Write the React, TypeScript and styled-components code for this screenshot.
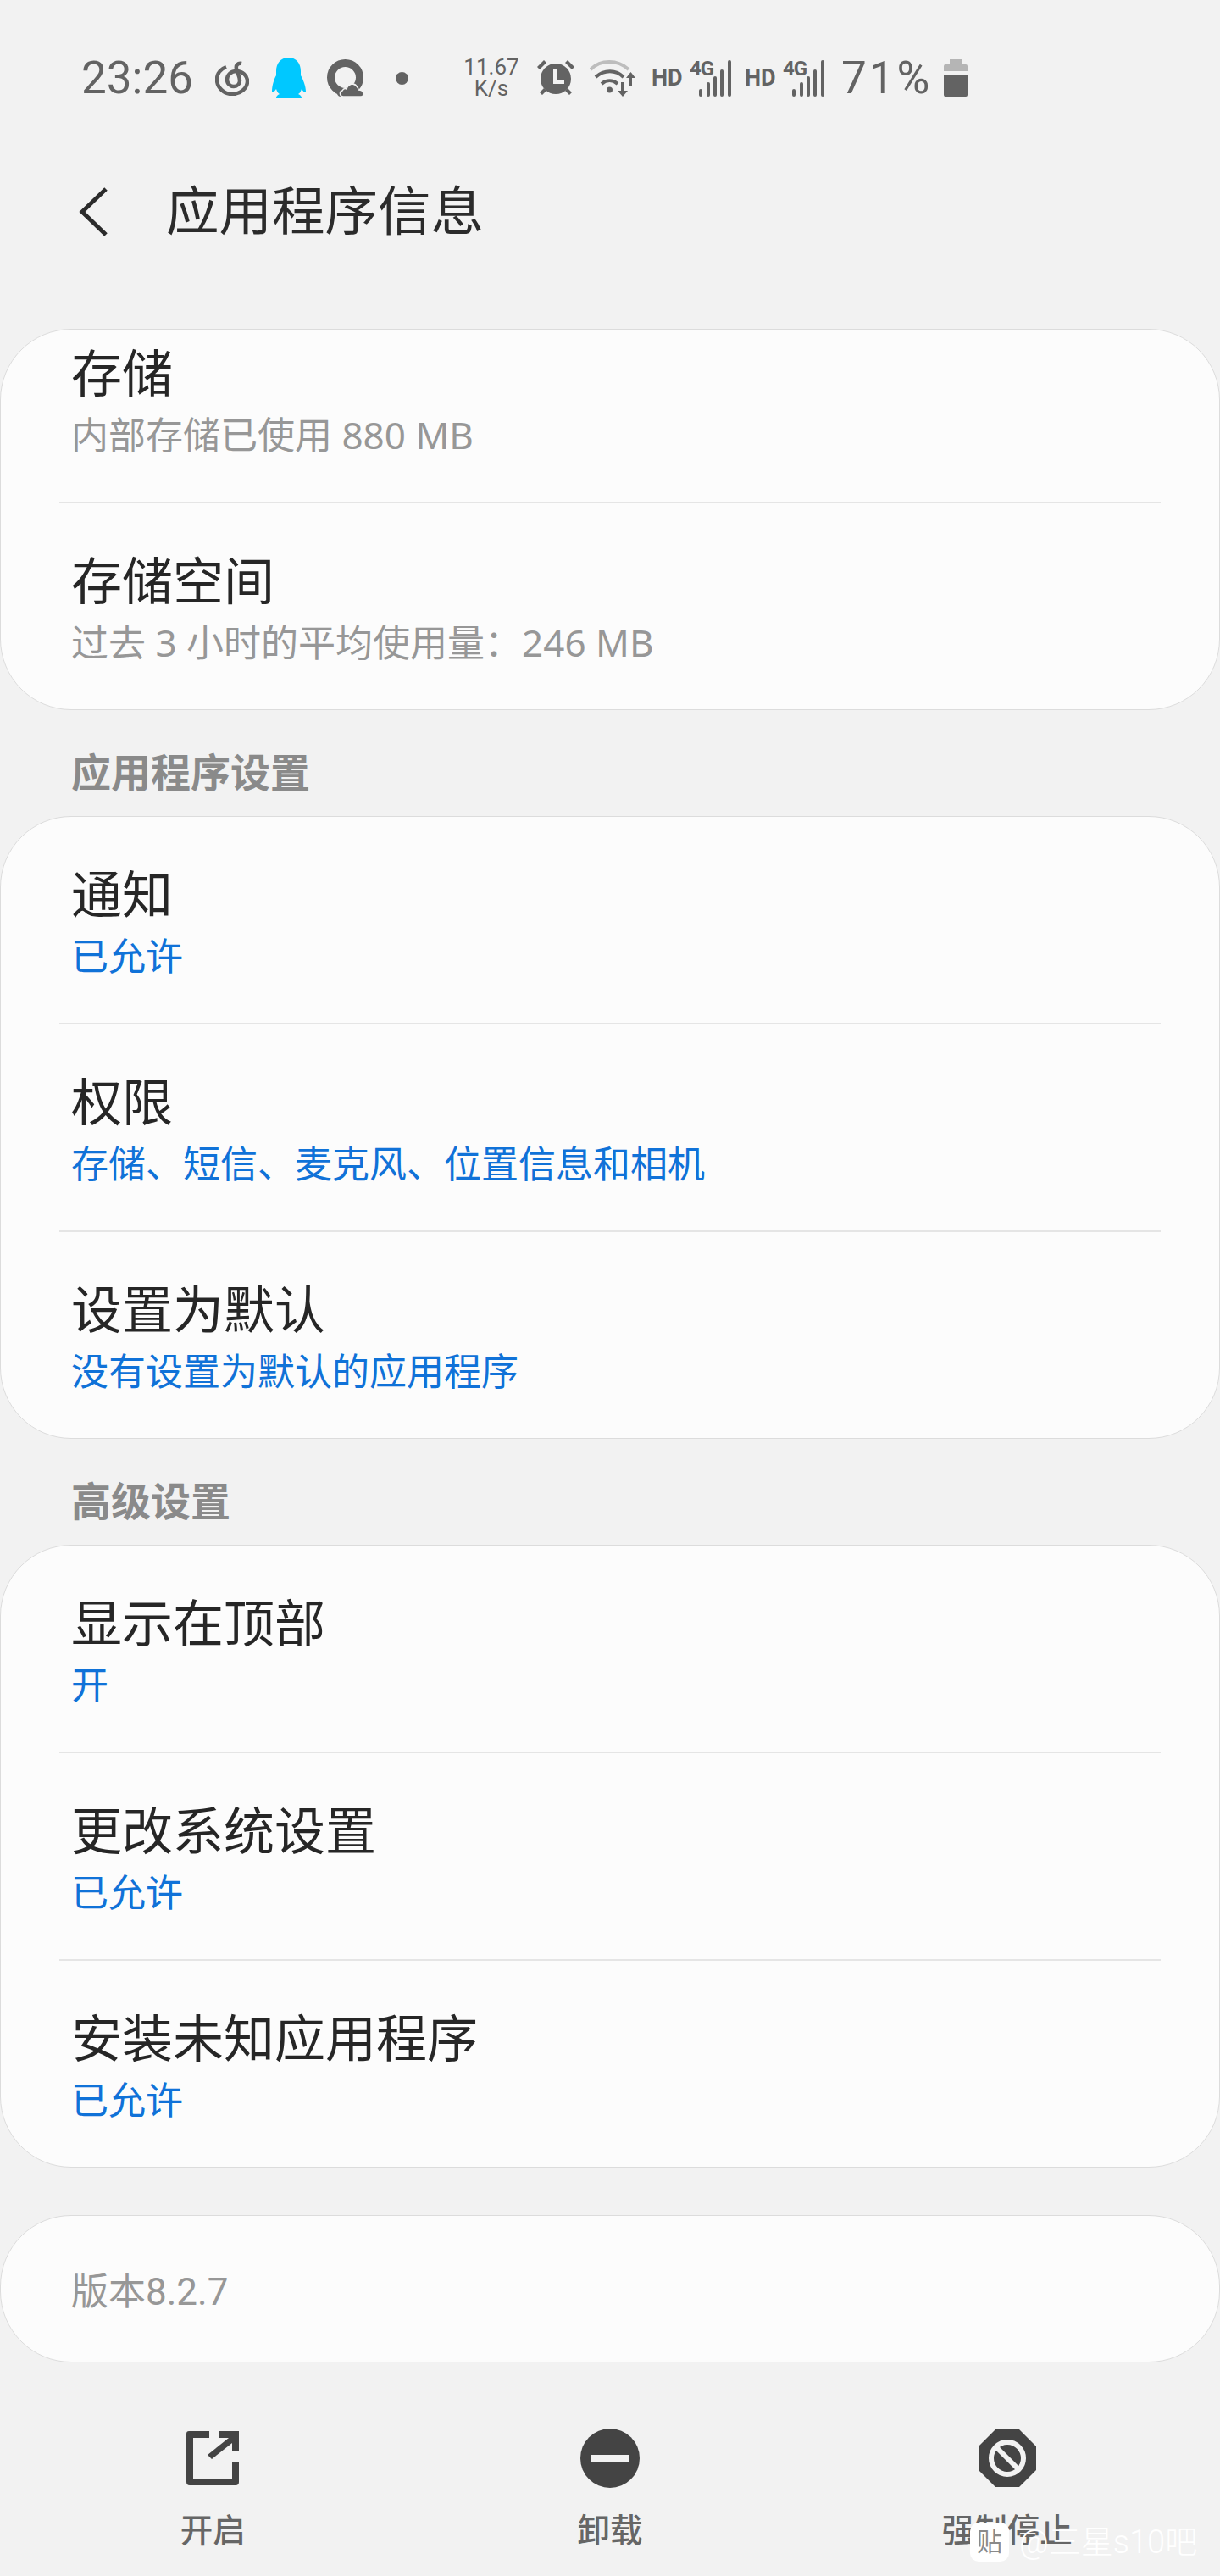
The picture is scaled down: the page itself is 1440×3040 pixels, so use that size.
import React from "react";
import styled, { createGlobalStyle } from "styled-components";

const Global = createGlobalStyle`
  html, body { margin: 0; padding: 0; background: #f2f2f2; }
  body { font-family: "Roboto", "Noto Sans CJK SC", sans-serif; }
`;

const Page = styled.div`
  position: relative;
  width: 1440px;
  height: 3040px;
  overflow: hidden;
  background: #f2f2f2;
  display: flex;
  flex-direction: column;
`;

const StatusBar = styled.div`
  height: 184px;
  display: flex;
  align-items: center;
  padding-left: 96px;
  color: #636363;
  box-sizing: border-box;
`;
const StatusText = styled.span<{ $ml: number; $mr: number; $spacing: number }>`
  font-size: 53px;
  line-height: 60px;
  letter-spacing: ${(p) => p.$spacing}px;
  margin-left: ${(p) => p.$ml}px;
  margin-right: ${(p) => p.$mr}px;
`;
const Speed = styled.div`
  width: 70px;
  margin-right: 18px;
  font-size: 26px;
  line-height: 25px;
  text-align: center;
`;
const HD = styled.span<{ $mr: number }>`
  font-size: 27px;
  font-weight: 700;
  line-height: 30px;
  width: 36px;
  margin-right: ${(p) => p.$mr}px;
`;
const IconSlot = styled.svg<{ $mr: number }>`
  flex: none;
  margin-right: ${(p) => p.$mr}px;
`;
const NetSignal = styled.div`
  position: relative;
  width: 49px;
  height: 44px;
  margin-right: 16px;
`;
const NetLabel = styled.span`
  position: absolute;
  left: 0;
  top: -3px;
  font-size: 24px;
  font-weight: 700;
  line-height: 28px;
  letter-spacing: -1px;
`;

const AppBar = styled.div`
  height: 132px;
  display: flex;
  align-items: center;
  padding-left: 92px;
  box-sizing: border-box;
`;
const AppTitle = styled.h1`
  margin: 2px 0 0 68px;
  font-size: 62.5px;
  font-weight: 400;
  line-height: 80px;
  color: #2b2b2b;
`;

const Content = styled.div`
  margin-top: 72px;
  display: flex;
  flex-direction: column;
`;
const Card = styled.section`
  background: #fcfcfc;
  border-radius: 84px;
  border: 1px solid #dcdcdc;
  box-sizing: border-box;
  overflow: hidden;
`;
const Row = styled.div<{ $short?: boolean }>`
  height: ${(p) => (p.$short ? 203 : 243)}px;
  box-sizing: border-box;
  padding: 0 83px 47px;
  display: flex;
  flex-direction: column;
  justify-content: flex-end;
`;
const Divider = styled.div`
  height: 2px;
  margin: 0 69px;
  background: #e5e5e5;
`;
const Title = styled.div`
  font-size: 60px;
  line-height: 76px;
  color: #262626;
`;
const Sub = styled.div<{ $accent?: boolean }>`
  font-family: "Noto Sans", "Noto Sans CJK SC", sans-serif;
  font-size: 44px;
  line-height: 64px;
  color: ${(p) => (p.$accent ? "#1072d8" : "#979797")};
`;
const SectionHead = styled.h2`
  margin: 0;
  height: 125px;
  padding: 47px 84px 0;
  box-sizing: border-box;
  font-size: 47px;
  font-weight: 700;
  line-height: 56px;
  color: #8a8a8a;
`;
const VersionCard = styled(Card)`
  margin-top: 56px;
  height: 174px;
  display: flex;
  align-items: center;
  padding: 0 83px;
  font-size: 44px;
  color: #979797;
`;
const BottomBar = styled.div`
  margin-top: 78px;
  padding: 0 17px;
  display: grid;
  grid-template-columns: repeat(3, 1fr);
`;
const Action = styled.div`
  display: flex;
  flex-direction: column;
  align-items: center;
`;
const ActionIcon = styled.div`
  height: 70px;
  display: flex;
  align-items: center;
  justify-content: center;
`;
const ActionLabel = styled.span`
  margin-top: 26px;
  font-size: 38.5px;
  font-weight: 500;
  line-height: 50px;
  color: #666666;
`;
const Watermark = styled.div`
  position: absolute;
  left: 1145px;
  top: 2977px;
  display: flex;
  align-items: center;
  white-space: nowrap;
  color: #ffffff;
  font-size: 38px;
  line-height: 46px;
`;
const WatermarkBadge = styled.span`
  width: 46px;
  height: 46px;
  margin-right: 12px;
  border-radius: 10px;
  background: #ffffff;
  color: #8a8a8a;
  font-size: 30px;
  line-height: 46px;
  text-align: center;
`;
const WatermarkText = styled.span`
  font-weight: 300;
`;

const Bars = () => (
  <svg width="49" height="44" viewBox="0 0 49 44" style={{ display: "block" }}>
    <g fill="#636363">
      <rect x="11" y="35" width="4" height="9" rx="2" />
      <rect x="20" y="27" width="4" height="17" rx="2" />
      <rect x="28" y="20" width="4" height="24" rx="2" />
      <rect x="36" y="12" width="4" height="32" rx="2" />
      <rect x="45" y="1" width="4" height="43" rx="2" />
    </g>
  </svg>
);

const Net = () => (
  <NetSignal>
    <Bars />
    <NetLabel>4G</NetLabel>
  </NetSignal>
);

const rows1 = [
  { t: "存储", s: "内部存储已使用 880 MB", short: true },
  { t: "存储空间", s: "过去 3 小时的平均使用量：246 MB" },
];
const rows2 = [
  { t: "通知", s: "已允许" },
  { t: "权限", s: "存储、短信、麦克风、位置信息和相机" },
  { t: "设置为默认", s: "没有设置为默认的应用程序" },
];
const rows3 = [
  { t: "显示在顶部", s: "开" },
  { t: "更改系统设置", s: "已允许" },
  { t: "安装未知应用程序", s: "已允许" },
];

type R = { t: string; s: string; short?: boolean };
const Rows = ({ items, accent }: { items: R[]; accent?: boolean }) => (
  <Card>
    {items.map((r, i) => (
      <React.Fragment key={r.t}>
        {i > 0 && <Divider />}
        <Row $short={r.short}>
          <Title>{r.t}</Title>
          <Sub $accent={accent}>{r.s}</Sub>
        </Row>
      </React.Fragment>
    ))}
  </Card>
);

export default function App() {
  return (
    <Page>
      <Global />
      <StatusBar>
        <StatusText $ml={0} $mr={26} $spacing={0}>23:26</StatusText>
        <IconSlot $mr={26} width="40" height="42" viewBox="0 0 40 42">
          <g fill="none" stroke="#636363" strokeWidth="4.5">
            <path d="M13 8C5 11 2 17 2 23c0 9 8 17 18 17s18-7 18-15c0-7-6-12-13-12-6 0-11 4-11 10 0 5 4 8 8 8s7-3 7-7c0-5-3-9-4-14-1-4 2-7 6-6" />
          </g>
        </IconSlot>
        <IconSlot $mr={25} width="41" height="48" viewBox="0 0 41 48">
          <path
            fill="#00c8ff"
            d="M20.5 0C30 0 35 7 35 16v5c3 5 6 13 6 19-1 2-3 0-5-3-1 3-2 5-4 6 2 1 4 2 4 5H6c0-3 2-4 4-5-2-1-3-3-4-6-2 3-4 5-5 3 0-6 2-14 5-19v-5C6 7 11 0 20.5 0z"
          />
        </IconSlot>
        <IconSlot $mr={37} width="44" height="44" viewBox="0 0 44 44">
          <ellipse cx="21.500" cy="21.500" rx="17" ry="17" fill="none" stroke="#636363" strokeWidth="9" />
          <path d="M12 34h26v10H16c-2 0-3-1-4-3z" fill="#636363" />
          <path
            d="M19 44c-4 0-5-6-1-7 1-2 3-3 5-2 2-6 9-8 12-3 1 1 2 3 2 4 7 0 8 8 3 8z"
            fill="#636363"
            stroke="#f2f2f2"
            strokeWidth="1.500"
          />
        </IconSlot>
        <IconSlot $mr={63} width="15" height="15" viewBox="0 0 15 15">
          <circle cx="7.5" cy="7.5" r="7.5" fill="#636363" />
        </IconSlot>
        <Speed>
          11.67
          <br />
          K/s
        </Speed>
        <IconSlot $mr={17} width="46" height="44" viewBox="0 0 46 44">
          <g fill="#636363">
            <circle cx="23" cy="23" r="18" />
            <path d="M1 9l8-8 3 3-8 8zM45 9l-8-8-3 3 8 8zM4 39l5-5 3 3-5 5zM42 39l-5-5-3 3 5 5z" />
          </g>
          <path d="M20 12h5v12h8v5H20z" fill="#f2f2f2" />
        </IconSlot>
        <IconSlot $mr={17} width="56" height="44" viewBox="0 0 56 44">
          <g fill="none" strokeWidth="4">
            <path d="M1 12C13 0 33 0 46 12" stroke="#bdbdbd" />
            <path d="M7 21c10-9 24-9 33 0M14 29c6-5 13-5 19 0" stroke="#636363" />
          </g>
          <circle cx="23.5" cy="36" r="3.5" fill="#636363" />
          <path d="M37 27h4v10h4l-6 7-6-7h4zM47 32h3V22h4l-5.500-7-5.500 7h4z" fill="#636363" />
        </IconSlot>
        <HD $mr={9}>HD</HD>
        <Net />
        <HD $mr={9}>HD</HD>
        <Net />
        <StatusText $ml={4} $mr={14} $spacing={3}>71%</StatusText>
        <IconSlot $mr={0} width="28" height="44" viewBox="0 0 28 44">
          <path d="M7 0h14v6h5a2 2 0 0 1 2 2v6H0V8a2 2 0 0 1 2-2h5z" fill="#b5b5b5" />
          <path d="M0 18h28v24a2 2 0 0 1-2 2H2a2 2 0 0 1-2-2z" fill="#636363" />
        </IconSlot>
      </StatusBar>
      <AppBar>
        <svg width="36" height="58" viewBox="0 0 36 58">
          <path d="M33 2L5 29l28 27" fill="none" stroke="#2b2b2b" strokeWidth="5" />
        </svg>
        <AppTitle>应用程序信息</AppTitle>
      </AppBar>
      <Content>
        <Rows items={rows1} />
        <SectionHead>应用程序设置</SectionHead>
        <Rows items={rows2} accent />
        <SectionHead>高级设置</SectionHead>
        <Rows items={rows3} accent />
        <VersionCard>版本8.2.7</VersionCard>
        <BottomBar>
          <Action>
            <ActionIcon>
              <svg width="62" height="64" viewBox="0 0 62 64">
                <path
                  fill="#444"
                  d="M3 0h24v8H8v48h46V37h8v23a4 4 0 0 1-4 4H4a4 4 0 0 1-4-4V3a3 3 0 0 1 3-3z"
                />
                <path fill="#444" d="M38 0h24v24h-8V14L30 33l-5-5 25-20H38z" />
              </svg>
            </ActionIcon>
            <ActionLabel>开启</ActionLabel>
          </Action>
          <Action>
            <ActionIcon>
              <svg width="70" height="70" viewBox="0 0 70 70">
                <circle cx="35" cy="35" r="35" fill="#444" />
                <rect x="13" y="31" width="44" height="8" fill="#f2f2f2" />
              </svg>
            </ActionIcon>
            <ActionLabel>卸载</ActionLabel>
          </Action>
          <Action>
            <ActionIcon>
              <svg width="68" height="68" viewBox="0 0 68 68">
                <path fill="#444" d="M20 0h28l20 20v28L48 68H20L0 48V20z" />
                <circle cx="34" cy="34" r="19" fill="none" stroke="#f2f2f2" strokeWidth="6" />
                <path d="M22 22l24 24" stroke="#f2f2f2" strokeWidth="6" />
              </svg>
            </ActionIcon>
            <ActionLabel>强制停止</ActionLabel>
          </Action>
        </BottomBar>
      </Content>
      <Watermark>
        <WatermarkBadge>贴</WatermarkBadge>
        <WatermarkText>@三星s10吧</WatermarkText>
      </Watermark>
    </Page>
  );
}
